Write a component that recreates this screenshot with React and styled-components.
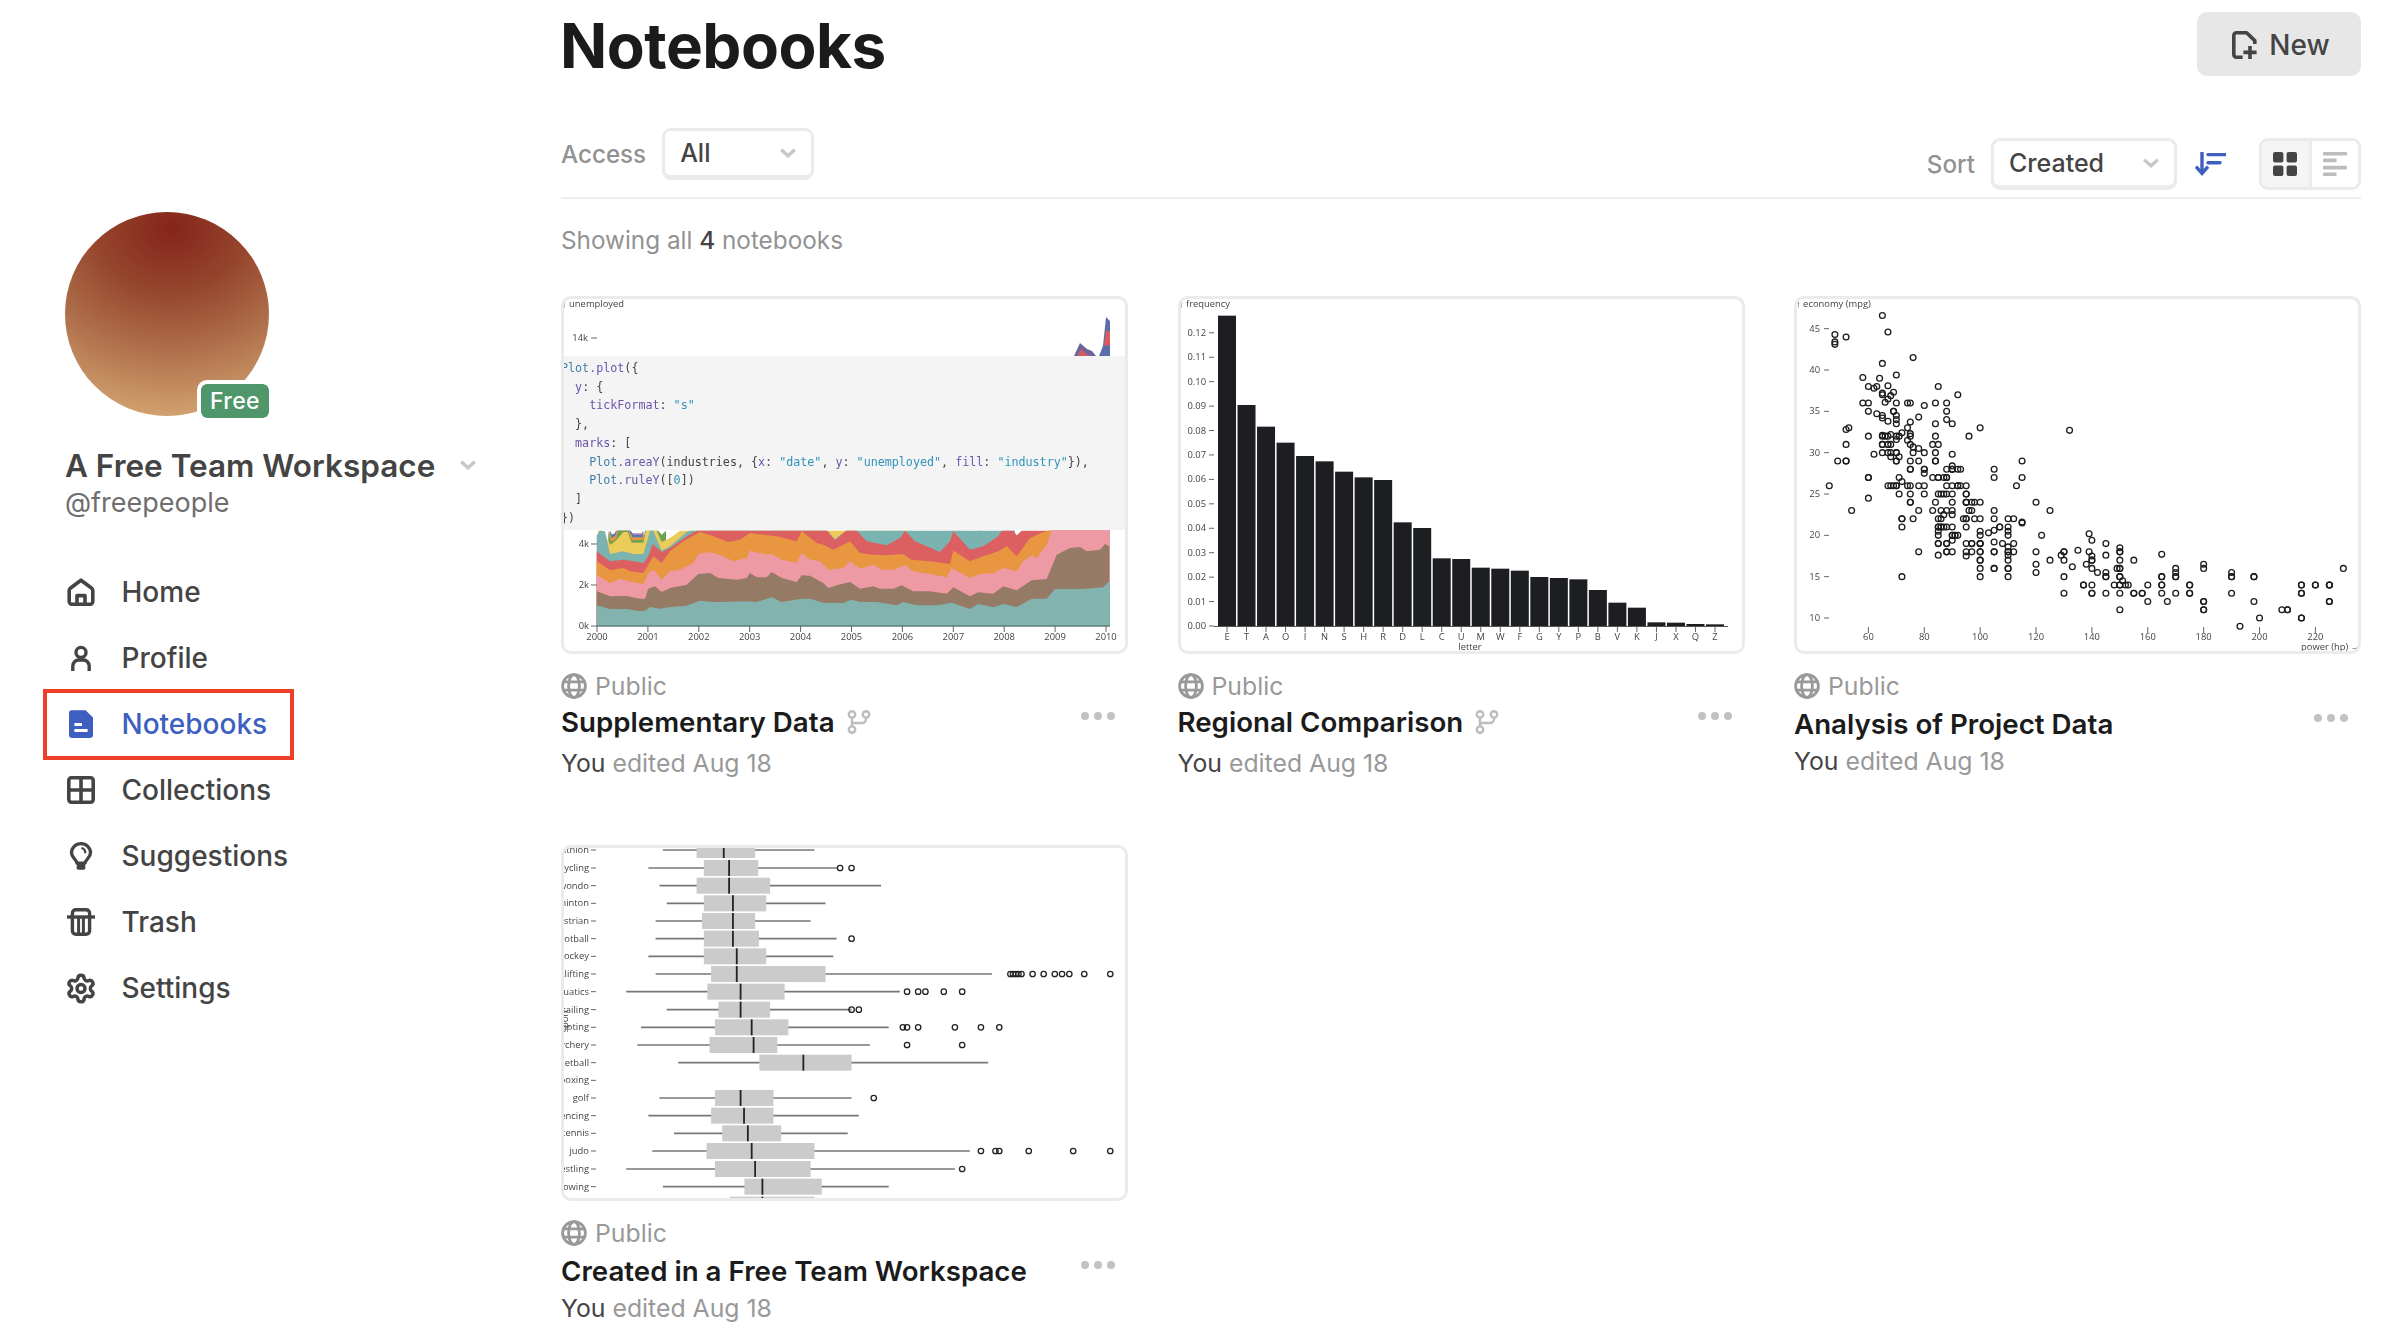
import React from "react";
import styled, { createGlobalStyle } from "styled-components";
import { Settings } from "lucide-react";

const GlobalStyle = createGlobalStyle`
  html, body {
    margin: 0;
    background: #fff;
    font-family: Inter, "Liberation Sans", sans-serif;
    color: #444;
  }
  *, *::before, *::after { box-sizing: border-box; }
`;

const NAV = ["Home", "Profile", "Notebooks", "Collections", "Suggestions", "Trash", "Settings"];

const CODE = [
  [["Plot", "blue"], [".plot", "purple"], ["({", "plain"]],
  [["  y", "purple"], [": {", "plain"]],
  [["    tickFormat", "purple"], [": ", "plain"], ['"s"', "str"]],
  [["  },", "plain"]],
  [["  marks", "purple"], [": [", "plain"]],
  [["    Plot", "blue"], [".areaY", "purple"], ["(industries, {", "plain"], ["x", "purple"], [": ", "plain"], ['"date"', "str"], [", ", "plain"], ["y", "purple"], [": ", "plain"], ['"unemployed"', "str"], [", ", "plain"], ["fill", "purple"], [": ", "plain"], ['"industry"', "str"], ["}),", "plain"]],
  [["    Plot", "blue"], [".ruleY", "purple"], ["([", "plain"], ["0", "str"], ["])", "plain"]],
  [["  ]", "plain"]],
  [["})", "plain"]],
];

const CODE_COLORS = { blue: "#3f7fa6", purple: "#6a55ad", str: "#2f93b8", plain: "#444" };

// stacked layers painted from the top one down, tops as [x, y] in 1/3 px from the plot's corner
const AREA_LAYERS = [
  ["#c47fb2", [[58, 8], [64, 22], [76, 18], [82, 8], [120, 8], [128, 16], [156, 16], [160, 8]]],
  ["#4d78c0", [[60, 8], [66, 20], [74, 16], [78, 8], [122, 8], [130, 20], [155, 20], [158, 8]]],
  ["#e8963f", [[58, 8], [65, 30], [75, 24], [80, 8], [118, 8], [128, 28], [158, 28], [162, 8]]],
  ["#6fa34f", [[55, 8], [62, 42], [78, 32], [85, 8], [115, 8], [125, 36], [160, 36], [165, 8], [205, 8], [215, 20], [228, 8]]],
  ["#ebcb5a", [[24, 8], [40, 8], [52, 35], [62, 50], [80, 35], [100, 12], [113, 12], [125, 44], [160, 44], [168, 8], [200, 8], [215, 42], [240, 30], [270, 8], [970, 8], [985, 22], [1005, 8], [1020, 8], [1050, 38], [1080, 8], [1120, 8], [1140, 28], [1165, 8], [1175, 8], [1195, 24], [1220, 8]]],
  ["#7ab3af", [[20, 22], [30, 8], [45, 10], [60, 78], [100, 70], [130, 78], [160, 78], [170, 45], [180, 8], [190, 8], [215, 68], [240, 55], [290, 12], [300, 8], [710, 8], [735, 33], [770, 8], [800, 8], [830, 8], [840, 8], [890, 8], [930, 8], [950, 8], [1265, 8], [1275, 8]]],
  ["#dc5f61", [[20, 70], [60, 100], [100, 95], [130, 100], [160, 105], [175, 85], [188, 48], [215, 72], [240, 60], [290, 25], [320, 8], [700, 8], [712, 8], [735, 36], [768, 8], [800, 8], [830, 40], [890, 52], [930, 30], [945, 8], [975, 40], [1050, 72], [1080, 40], [1090, 10], [1140, 65], [1180, 55], [1225, 25], [1235, 8], [1270, 8], [1280, 22], [1295, 8], [1390, 8]]],
  ["#e8963f", [[20, 100], [60, 127], [100, 120], [120, 130], [160, 135], [175, 110], [190, 85], [215, 105], [240, 70], [280, 40], [330, 12], [370, 25], [415, 42], [450, 35], [480, 15], [520, 20], [560, 25], [620, 40], [635, 10], [680, 45], [700, 50], [730, 65], [780, 40], [810, 75], [850, 80], [890, 82], [940, 78], [965, 95], [1020, 100], [1080, 108], [1090, 68], [1140, 100], [1180, 85], [1225, 70], [1250, 55], [1280, 85], [1320, 30], [1360, 12], [1385, 6]]],
  ["#ee9aa5", [[20, 140], [60, 165], [90, 153], [130, 163], [160, 168], [175, 135], [190, 125], [215, 155], [240, 130], [270, 125], [310, 105], [325, 78], [360, 72], [400, 85], [430, 100], [470, 90], [480, 68], [530, 80], [545, 78], [575, 95], [620, 105], [635, 75], [660, 95], [690, 100], [715, 125], [760, 120], [780, 100], [810, 122], [850, 110], [875, 125], [910, 125], [945, 110], [970, 130], [1020, 138], [1070, 148], [1085, 120], [1140, 150], [1170, 138], [1210, 135], [1240, 120], [1280, 130], [1300, 100], [1325, 82], [1340, 90], [1370, 50], [1385, 6], [1560, 6]]],
  ["#957a66", [[20, 190], [60, 205], [110, 204], [150, 212], [165, 212], [175, 182], [195, 175], [215, 192], [240, 180], [290, 170], [325, 138], [360, 135], [385, 150], [440, 155], [470, 150], [480, 135], [500, 148], [530, 148], [545, 132], [575, 150], [620, 162], [635, 142], [660, 143], [700, 165], [715, 180], [740, 172], [780, 162], [810, 182], [850, 175], [870, 182], [910, 182], [935, 172], [970, 190], [1020, 190], [1070, 197], [1090, 178], [1140, 205], [1165, 193], [1210, 197], [1240, 175], [1280, 187], [1325, 157], [1370, 153], [1400, 80], [1440, 60], [1470, 57], [1490, 70], [1530, 65], [1545, 48], [1558, 55]]],
  ["#83b3ae", [[20, 232], [60, 243], [110, 243], [150, 250], [165, 248], [180, 237], [210, 242], [235, 238], [290, 233], [330, 218], [370, 222], [400, 222], [470, 220], [500, 222], [545, 208], [575, 222], [630, 213], [660, 212], [700, 224], [760, 225], [783, 215], [810, 222], [860, 222], [920, 232], [940, 222], [980, 232], [1040, 232], [1085, 224], [1140, 243], [1165, 228], [1210, 238], [1240, 228], [1280, 237], [1325, 212], [1370, 212], [1395, 183], [1480, 183], [1540, 178], [1555, 162], [1560, 162]]],
];

const LETTERS = [
  ["E", 77], ["T", 345], ["A", 410], ["O", 458], ["I", 498], ["N", 514], ["S", 545], ["H", 562], ["R", 570],
  ["D", 697], ["L", 714], ["C", 805], ["U", 807], ["M", 833], ["W", 836], ["F", 842], ["G", 861], ["Y", 864],
  ["P", 868], ["B", 900], ["V", 938], ["K", 953], ["J", 997], ["X", 998], ["Q", 1002], ["Z", 1003],
];

const CARS = [
  [130,18],[165,15],[150,18],[150,16],[140,17],[198,15],[220,14],[215,14],[225,14],[190,15],[170,15],[160,14],[150,15],[225,14],[95,24],[95,22],[97,18],[85,21],[88,27],[46,26],[87,25],[90,24],[95,25],[113,26],[90,21],[215,10],[200,10],[210,11],[193,9],[88,27],[90,28],[95,25],[100,19],[105,16],[100,17],[88,19],[100,18],[165,14],[175,14],[153,14],[150,14],[180,12],[170,13],[175,13],[110,18],[72,22],[100,19],[88,18],[86,23],[90,28],[70,30],[76,30],[65,31],[69,35],[60,27],[70,26],[95,24],[80,25],[54,23],[90,20],[86,21],[155,13],[160,12],[190,13],[97,19],[130,13],[140,13],[112,18],[76,22],[87,21],[69,26],[86,22],[92,28],[97,23],[80,28],[145,13],[137,14],[158,13],[215,13],[225,12],[105,18],[100,16],[72,21],[94,22],[85,19],[107,21],[145,15],[230,16],[49,29],[75,24],[91,20],[122,20],[180,11],[67,31],[65,32],[75,25],[110,16],[105,16],[52,29],[60,24.5],[70,29],[78,26],[75,26],[83,27],[67,26],[80,26],[84,29],[84,29],[92,26],[96,32],[100,33],[132,32.7],[115,29],[115,27],[105,28],[105,27],[120,24],[125,23],[75,28],[85,27],[88,26],[90,26],[95,26],[85,25],[86,25],[88,25],[90,25],[95,24],[98,24],[97,24],[100,24],[84,24],[75,24],[60,27],[72,26.5],[68,26],[70,26],[71,27],[71,25],[78,23],[83,23],[88,23],[90,23],[96,23],[105,23],[72,22],[85,22],[87,22.5],[90,22.5],[95,22],[98,22],[100,22],[105,22],[110,22],[112,22],[115,21.5],[115,21.6],[95,21],[85,21],[86,21],[88,21],[85,20.5],[85,20],[90,20],[91,20],[92,20],[100,20.5],[100,20],[103,20.3],[105,20.6],[107,21],[110,21],[110,20.5],[110,20],[85,19],[88,19],[90,19.4],[95,19],[97,19],[100,19],[105,19.2],[108,19],[110,18.6],[112,19],[110,18],[95,18],[100,18],[105,18],[110,17.6],[110,17],[100,17],[85,17.6],[95,17.5],[110,16],[100,15],[110,15],[72,15],[78,18],[88,18],[90,18],[120,18],[120,16.5],[120,15.5],[125,17],[130,18],[129,17.6],[130,17],[130,15],[135,18.2],[133,16.2],[139,20.2],[140,19.4],[139,18],[140,17.5],[140,17],[138,16.5],[140,16],[142,15.5],[145,19],[145,17.6],[145,15.5],[145,15],[150,18.5],[150,18],[150,17],[149,16],[150,16],[150,15],[151,14.5],[152,14],[148,14],[150,14],[155,17],[150,13],[140,14],[140,13],[137,14],[150,11],[155,13],[158,13],[165,17.7],[165,15],[165,14],[165,13],[167,12],[170,16],[170,15.5],[170,15],[175,14],[175,13],[180,16.5],[180,16],[180,12],[180,11],[190,15.5],[190,15],[198,15],[198,12],[208,11],[210,11],[215,14],[215,13],[215,10],[220,14],[225,14],[225,12],
  [65,46.6],[67,44.6],[48,44.3],[52,44],[48,43.4],[48,43.1],[76,41.5],[65,40.8],[70,39.4],[58,39.1],[67,38.1],[63,38],[64,39],[60,38],[62,37.8],[85,38],[69,37.3],[65,37.2],[65,37],[92,37],[68,36.9],[67,36.5],[66,36.1],[58,36],[60,36],[70,36],[74,36],[75,36],[80,35.7],[84,36],[88,36],[60,35],[88,35],[63,34.7],[65,34.5],[65,34.2],[69,35],[70,34.5],[70,34],[67,33.8],[75,33.7],[84,33.5],[70,33.5],[78,34.3],[88,34],[90,33.5],[53,33],[52,32.8],[74,33],[72,32.4],[75,32.3],[75,32],[60,32],[65,32.1],[66,32],[68,32.2],[70,32],[71,32],[67,32],[70,31.6],[74,31.5],[75,31],[76,30.7],[52,31],[65,31],[67,31],[68,31],[83,31],[85,31],[84,32],[78,30.5],[75,29],[78,29],[80,30],[84,30],[62,29.8],[65,30],[67,30],[68,30],[70,30],[71,29.5],[68,29.5],[70,29],[52,29],[90,29.8],[75,28],[80,28],[80,27.5],[90,28.4],[90,28],[88,28],[93,28],[87,27],[85,27],[92,26],[93,26],[74,26],
];

const BOX_ROWS = [
  ["triathlon", 30, 295, 383, 454, 536, 691, []],
  ["cycling", 84, 257, 402, 468, 544, 750, [758, 788]],
  ["taekwondo", 137, 286, 383, 468, 575, 865, []],
  ["badminton", 190, 305, 402, 478, 565, 720, []],
  ["equestrian", 243, 276, 397, 478, 536, 681, []],
  ["football", 296, 276, 402, 478, 546, 749, [788]],
  ["hockey", 349, 257, 402, 488, 565, 740, []],
  ["weightlifting", 402, 276, 421, 488, 720, 1155, [1203, 1210, 1217, 1224, 1232, 1261, 1290, 1319, 1338, 1357, 1396, 1464]],
  ["aquatics", 455, 199, 411, 498, 613, 914, [933, 962, 981, 1029, 1077]],
  ["sailing", 509, 305, 440, 498, 575, 788, [788, 807]],
  ["shooting", 562, 238, 431, 527, 623, 885, [922, 933, 962, 1058, 1126, 1174]],
  ["archery", 615, 228, 417, 532, 594, 836, [933, 1077]],
  ["basketball", 668, 335, 547, 662, 788, 1145, []],
  ["boxing", 721],
  ["golf", 774, 286, 431, 498, 584, 788, [846]],
  ["fencing", 827, 257, 421, 507, 584, 807, []],
  ["table tennis", 880, 324, 450, 517, 604, 778, []],
  ["judo", 933, 267, 409, 527, 691, 1097, [1126, 1164, 1174, 1251, 1367, 1464]],
  ["wrestling", 987, 199, 431, 536, 681, 1058, [1077]],
  ["rowing", 1040, 295, 508, 555, 710, 885, []],
];

function areaPath(points) {
  const tx = (x) => (29 + x / 3).toFixed(1);
  const ty = (y) => (232 + y / 3).toFixed(1);
  const first = points[0][0];
  const last = points[points.length - 1][0];
  const top = points.map(([x, y]) => `${tx(x)},${ty(y)}`).join(" ");
  return `M${tx(first)},330 L${top} L${tx(last)},330 Z`;
}

function AreaChart() {
  return (
    <ChartSvg viewBox="3 3 561 352">
      <AxisText x="1" y="11">↑ unemployed</AxisText>
      <AxisText x="27" y="45" $end>14k</AxisText>
      <line x1="30" x2="36" y1="42" y2="42" stroke="#666" />
      <path d="M513 60 L519 47 L526 53 L531 55 L535 60 Z" fill="#6d6597" />
      <path d="M516 60 L520 53 L526 58 L529 60 Z" fill="#cf5a68" />
      <path d="M538 60 L542 50 L545 21 L549 25 L549 60 Z" fill="#5a6fa8" />
      <path d="M543 50 L545 34 L549 36 L549 49 Z" fill="#d95b5e" />
      {AREA_LAYERS.map(([color, points], i) => (
        <path key={i} d={areaPath(points)} fill={color} />
      ))}
      <line x1="36" x2="549" y1="330" y2="330" stroke="#5b7f7c" strokeWidth="1.5" />
      {[["4k", 248], ["2k", 289], ["0k", 330]].map(([label, y]) => (
        <g key={label}>
          <AxisText x="28" y={y + 3} $end>{label}</AxisText>
          <line x1="30" x2="36" y1={y} y2={y} stroke="#666" />
        </g>
      ))}
      {Array.from({ length: 11 }, (_, i) => (
        <g key={i}>
          <line x1={36 + i * 50.9} x2={36 + i * 50.9} y1="330" y2="336" stroke="#666" />
          <AxisText x={36 + i * 50.9} y="344" $middle>{2000 + i}</AxisText>
        </g>
      ))}
    </ChartSvg>
  );
}

function BarChart() {
  const ticks = Array.from({ length: 13 }, (_, i) => i);
  return (
    <ChartSvg viewBox="3 3 561 352">
      <AxisText x="1" y="11">↑ frequency</AxisText>
      {ticks.map((i) => {
        const y = 1008 / 3 - 6 - (i * 73.3) / 3;
        return (
          <g key={i}>
            <AxisText x="28" y={y + 3} $end>{(i / 100).toFixed(2)}</AxisText>
            <line x1="31" x2="36" y1={y} y2={y} stroke="#666" />
          </g>
        );
      })}
      {LETTERS.map(([letter, top], i) => {
        const x = 40 + i * 19.52;
        const y = top / 3 - 6;
        return (
          <g key={letter}>
            <rect x={x} y={y} width="18" height={330 - y} fill="#1d1e22" />
            <line x1={x + 9} x2={x + 9} y1="330" y2="336" stroke="#666" />
            <AxisText x={x + 9} y="344" $middle>{letter}</AxisText>
          </g>
        );
      })}
      <line x1="36" x2="550" y1="330.5" y2="330.5" stroke="#555" />
      <AxisText x="292" y="354" $middle>letter</AxisText>
    </ChartSvg>
  );
}

function ScatterChart() {
  const px = (hp) => (231 + (hp - 60) * 7.3) / 2.613 - 14;
  const py = (mpg) => (116 + (45 - mpg) * 24.8) / 3 - 6;
  return (
    <ChartSvg viewBox="3 3 561 352">
      <AxisText x="2" y="11">↑ economy (mpg)</AxisText>
      {[45, 40, 35, 30, 25, 20, 15, 10].map((v) => (
        <g key={v}>
          <AxisText x="26" y={py(v) + 3} $end>{v}</AxisText>
          <line x1="30" x2="35" y1={py(v)} y2={py(v)} stroke="#666" />
        </g>
      ))}
      {[60, 80, 100, 120, 140, 160, 180, 200, 220].map((v) => (
        <g key={v}>
          <line x1={px(v)} x2={px(v)} y1="331" y2="337" stroke="#666" />
          <AxisText x={px(v)} y="344" $middle>{v}</AxisText>
        </g>
      ))}
      <AxisText x="566" y="354" $end>power (hp) →</AxisText>
      {CARS.map(([hp, mpg], i) => (
        <circle key={i} cx={px(hp)} cy={py(mpg)} r="2.9" fill="none" stroke="#1c1c1c" strokeWidth="1.3" />
      ))}
    </ChartSvg>
  );
}

function BoxChart() {
  const px = (z) => z / 2.613 - 11;
  const py = (z) => z / 3 - 5;
  return (
    <ChartSvg viewBox="3 3 561 350">
      <AxisText x="7" y="176" transform="rotate(-90 7 176)" $middle>sport</AxisText>
      {BOX_ROWS.map(([name, zy, wl, bl, med, br, wr, outliers]) => {
        const y = py(zy);
        return (
          <g key={name}>
            <AxisText x="28" y={y + 3} $end>{name}</AxisText>
            <line x1="30" x2="35" y1={y} y2={y} stroke="#666" />
            {wl && (
              <>
                <line x1={px(wl)} x2={px(wr)} y1={y} y2={y} stroke="#777" strokeWidth="1.6" />
                <rect x={px(bl)} y={y - 8} width={px(br) - px(bl)} height="16" fill="#cbcbcb" />
                <line x1={px(med)} x2={px(med)} y1={y - 8} y2={y + 8} stroke="#222" strokeWidth="1.8" />
                {outliers.map((o) => (
                  <circle key={o} cx={px(o)} cy={y} r="2.7" fill="none" stroke="#222" strokeWidth="1.3" />
                ))}
              </>
            )}
          </g>
        );
      })}
      <rect x={px(470)} y={py(1070)} width={px(691) - px(470)} height="16" fill="#cbcbcb" />
      <line x1={px(555)} x2={px(555)} y1={py(1070)} y2={py(1095)} stroke="#222" strokeWidth="1.8" />
    </ChartSvg>
  );
}

function NavIcon({ name }) {
  if (name === "Home")
    return (
      <IconSvg viewBox="0 0 28 28" fill="none" stroke="currentColor" strokeWidth="3.6" strokeLinejoin="round">
        <path d="M14 2.2 L3.6 10 a3 3 0 0 0-1.4 2.4 V23.4 a3 3 0 0 0 3 3 H22.8 a3 3 0 0 0 3-3 V12.4 a3 3 0 0 0-1.4-2.4 Z" />
        <path d="M10 26 V17.6 H18 V26" />
      </IconSvg>
    );
  if (name === "Profile")
    return (
      <IconSvg viewBox="0 0 28 28" fill="none" stroke="currentColor" strokeWidth="3.4">
        <circle cx="14" cy="8.4" r="5" />
        <path d="M5.8 27 V22 a6 6 0 0 1 6-6 h4.4 a6 6 0 0 1 6 6 V27" />
      </IconSvg>
    );
  if (name === "Notebooks")
    return (
      <IconSvg viewBox="0 0 28 28">
        <path d="M4.4 0.2 H18.6 L26 7.6 V25 a3 3 0 0 1-3 3 H5 a3 3 0 0 1-3-3 V2.8 a2.6 2.6 0 0 1 2.4-2.6 Z" fill="currentColor" />
        <path d="M7.4 14.4 H15 M7.4 20.4 H20.6" stroke="#fff" strokeWidth="3" />
      </IconSvg>
    );
  if (name === "Collections")
    return (
      <IconSvg viewBox="0 0 28 28" fill="none" stroke="currentColor" strokeWidth="3.6">
        <rect x="1.8" y="1.8" width="24.4" height="24.4" rx="2.6" />
        <path d="M14 1.8 V26.2 M1.8 14 H26.2" />
      </IconSvg>
    );
  if (name === "Suggestions")
    return (
      <IconSvg viewBox="0 0 28 30" fill="none" stroke="currentColor" strokeWidth="3.6">
        <path d="M9.6 22.6 C9 18.6 3.8 16.6 3.8 11.6 A10.2 9.8 0 0 1 24.2 11.6 C24.2 16.6 19 18.6 18.4 22.6 Z" strokeLinejoin="round" />
        <rect x="9.4" y="22" width="9.2" height="7.6" rx="1.6" fill="currentColor" stroke="none" />
        <path d="M14.4 6.4 A5.4 5.4 0 0 1 18.6 12" strokeWidth="2.4" />
      </IconSvg>
    );
  if (name === "Trash")
    return (
      <IconSvg viewBox="0 0 28 28" fill="none" stroke="currentColor" strokeWidth="3.4">
        <path d="M0 9 H28" />
        <rect x="5.4" y="1.8" width="17.2" height="24.4" rx="3.4" />
        <path d="M11.6 9 V26 M16.4 9 V26" strokeWidth="3" />
      </IconSvg>
    );
  return <Settings size={33} strokeWidth={2.6} />;
}

function Chevron() {
  return (
    <svg width="16" height="10" viewBox="0 0 16 10" fill="none" stroke="#c8c8c8" strokeWidth="3.4">
      <path d="M1.2 1.8 L8 7.8 L14.8 1.8" />
    </svg>
  );
}

function GlobeIcon() {
  return (
    <svg width="26" height="26" viewBox="0 0 26 26" fill="none" stroke="#999" strokeWidth="2.8">
      <circle cx="13" cy="13" r="11.4" />
      <ellipse cx="13" cy="13" rx="5.4" ry="11.4" />
      <path d="M2.6 8.8 H23.4 M2.6 17.2 H23.4" />
    </svg>
  );
}

function ForkIcon() {
  return (
    <svg width="24" height="24" viewBox="0 0 24 24" fill="none" stroke="#bdbdbd" strokeWidth="2.4">
      <circle cx="5" cy="4.4" r="3.2" />
      <circle cx="19" cy="4.4" r="3.2" />
      <circle cx="5" cy="19.6" r="3.2" />
      <path d="M5 7.6 V16.4 M19 7.6 V9 a4 4 0 0 1-4 4 H5" />
    </svg>
  );
}

function NewIcon() {
  return (
    <svg width="25" height="28" viewBox="0 0 25 28" fill="none" stroke="#444" strokeWidth="3.6">
      <path d="M10.6 26.2 H4.4 a2.6 2.6 0 0 1-2.6-2.6 V4.4 A2.6 2.6 0 0 1 4.4 1.8 H14.6 L22.8 9.6 V13" strokeLinejoin="round" />
      <path d="M18 15 V28 M11.4 21.4 H24.6" />
    </svg>
  );
}

function SortIcon() {
  return (
    <svg width="31" height="24" viewBox="0 0 31 24" fill="none" stroke="#3d5fbf" strokeWidth="3.4">
      <path d="M7 0 V20" />
      <path d="M1 14.6 L7 21.4 L13 14.6" />
      <path d="M13 2.6 H31 M13 10.8 H25" strokeLinecap="round" />
    </svg>
  );
}

function GridIcon() {
  return (
    <svg width="24" height="24" viewBox="0 0 24 24" fill="#444">
      <rect width="10.4" height="10.4" rx="2" />
      <rect x="13.6" width="10.4" height="10.4" rx="2" />
      <rect y="13.6" width="10.4" height="10.4" rx="2" />
      <rect x="13.6" y="13.6" width="10.4" height="10.4" rx="2" />
    </svg>
  );
}

function ListIcon() {
  return (
    <svg width="24" height="24" viewBox="0 0 24 24" fill="#bdbdbd">
      <rect width="24" height="3.6" rx="1" />
      <rect y="6.6" width="13.6" height="3.6" rx="1" />
      <rect y="13.8" width="24" height="3.6" rx="1" />
      <rect y="20.4" width="13.6" height="3.6" rx="1" />
    </svg>
  );
}

function CodeBlock() {
  return (
    <CodeOverlay>
      {CODE.map((tokens, i) => (
        <CodeLine key={i}>
          {tokens.map(([text, kind], j) => (
            <CodeToken key={j} $kind={kind}>{text}</CodeToken>
          ))}
        </CodeLine>
      ))}
    </CodeOverlay>
  );
}

function NotebookCard({ title, forked, short, chart }) {
  return (
    <Card>
      <Thumb $short={short}>{chart}</Thumb>
      <Access>
        <GlobeIcon />
        <span>Public</span>
      </Access>
      <TitleRow $forked={forked}>
        <CardTitle>{title}</CardTitle>
        {forked && <ForkIcon />}
        <Dots>
          <i />
          <i />
          <i />
        </Dots>
      </TitleRow>
      <Edited $forked={forked}>
        <b>You</b> edited Aug 18
      </Edited>
    </Card>
  );
}

export default function App() {
  return (
    <>
      <GlobalStyle />
      <Page>
        <Sidebar>
          <Avatar>
            <PlanBadge>Free</PlanBadge>
          </Avatar>
          <WorkspaceName>
            A Free Team Workspace
            <Chevron />
          </WorkspaceName>
          <Handle>@freepeople</Handle>
          <Nav>
            {NAV.map((name) => (
              <NavItem key={name} $active={name === "Notebooks"}>
                <IconSlot>
                  <NavIcon name={name} />
                </IconSlot>
                {name}
              </NavItem>
            ))}
          </Nav>
        </Sidebar>
        <Main>
          <Header>
            <PageTitle>Notebooks</PageTitle>
            <NewButton>
              <NewIcon />
              New
            </NewButton>
          </Header>
          <Toolbar>
            <FilterGroup>
              <FieldLabel>Access</FieldLabel>
              <Select $width={152}>
                All
                <Chevron />
              </Select>
            </FilterGroup>
            <SortGroup>
              <FieldLabel>Sort</FieldLabel>
              <Select $width={186}>
                Created
                <Chevron />
              </Select>
              <SortButton>
                <SortIcon />
              </SortButton>
              <ViewToggle>
                <ViewCell $on>
                  <GridIcon />
                </ViewCell>
                <ViewCell>
                  <ListIcon />
                </ViewCell>
              </ViewToggle>
            </SortGroup>
          </Toolbar>
          <Count>
            Showing all <b>4</b> notebooks
          </Count>
          <CardGrid>
            <NotebookCard
              title="Supplementary Data"
              forked
              chart={
                <>
                  <AreaChart />
                  <CodeBlock />
                </>
              }
            />
            <NotebookCard title="Regional Comparison" forked chart={<BarChart />} />
            <NotebookCard title="Analysis of Project Data" chart={<ScatterChart />} />
            <NotebookCard title="Created in a Free Team Workspace" short chart={<BoxChart />} />
          </CardGrid>
        </Main>
      </Page>
    </>
  );
}

const Page = styled.div`
  display: grid;
  grid-template-columns: 561px 1800px;
  height: 1338px;
  overflow: hidden;
`;

const Sidebar = styled.aside`
  padding: 212px 0 0 65px;
`;

const Avatar = styled.div`
  position: relative;
  width: 204px;
  height: 204px;
  border-radius: 50%;
  background: radial-gradient(ellipse 125% 105% at 52% 8%, #84241a 0%, #96462d 30%, #b0714c 58%, #cb9868 82%, #e2b57e 100%);
`;

const PlanBadge = styled.span`
  position: absolute;
  right: -4px;
  bottom: -6px;
  width: 76px;
  height: 42px;
  display: flex;
  align-items: center;
  justify-content: center;
  border: 4px solid #fff;
  border-radius: 10px;
  background: #4f966b;
  background-clip: padding-box;
  color: #fff;
  font-size: 23px;
  font-weight: 500;
  letter-spacing: 0.4px;
`;

const WorkspaceName = styled.div`
  display: flex;
  align-items: center;
  gap: 25px;
  margin-top: 29px;
  height: 40px;
  font-size: 31.5px;
  font-weight: 600;
  color: #444;
  white-space: nowrap;
`;

const Handle = styled.div`
  height: 36px;
  line-height: 36px;
  font-size: 27px;
  color: #6e6e6e;
`;

const Nav = styled.nav`
  margin-top: 38px;
`;

const NavItem = styled.div`
  position: relative;
  display: flex;
  align-items: center;
  height: 66px;
  gap: 24.5px;
  font-size: 28px;
  font-weight: 500;
  color: ${({ $active }) => ($active ? "#3d5fbf" : "#444")};

  ${({ $active }) =>
    $active &&
    `&::after {
      content: "";
      position: absolute;
      left: -22px;
      top: -2px;
      width: 251px;
      height: 71px;
      border: 4px solid #ee4028;
    }`}
`;

const IconSlot = styled.span`
  width: 32px;
  display: flex;
  justify-content: center;
`;

const IconSvg = styled.svg`
  width: 28px;
  height: 28px;
`;

const Main = styled.main`
  min-width: 0;
`;

const Header = styled.header`
  display: flex;
  justify-content: space-between;
  align-items: center;
  margin-top: 12px;
  height: 64px;
`;

const PageTitle = styled.h1`
  margin: 2px 0 0 -1px;
  font-size: 62px;
  font-weight: 700;
  color: #1b1b1b;
  letter-spacing: -0.5px;
`;

const NewButton = styled.button`
  display: flex;
  align-items: center;
  justify-content: center;
  gap: 12px;
  width: 164px;
  height: 64px;
  padding: 2px 0 0 4px;
  border: 0;
  border-radius: 10px;
  background: #e7e7e7;
  color: #444;
  font: 500 28px Inter, sans-serif;
`;

const Toolbar = styled.div`
  display: flex;
  justify-content: space-between;
  align-items: flex-start;
  margin-top: 52px;
  height: 71px;
  padding-bottom: 7px;
  border-bottom: 2px solid #eee;
`;

const FilterGroup = styled.div`
  display: flex;
  align-items: center;
  gap: 16px;
`;

const SortGroup = styled(FilterGroup)`
  margin-top: 10px;
`;

const FieldLabel = styled.span`
  font-size: 24.2px;
  font-weight: 500;
  color: #929292;
`;

const Select = styled.div`
  display: flex;
  align-items: center;
  justify-content: space-between;
  width: ${({ $width }) => $width}px;
  height: 52px;
  padding: 0 15px;
  border: 3px solid #ebebeb;
  border-bottom-width: 5px;
  border-radius: 9px;
  background: #fff;
  font-size: 25px;
  font-weight: 500;
  color: #444;
`;

const SortButton = styled.span`
  display: flex;
  margin: 0 17px 0 2px;
`;

const ViewToggle = styled.div`
  display: flex;
  width: 102px;
  height: 52px;
  border: 3px solid #ebebeb;
  border-radius: 9px;
  overflow: hidden;
`;

const ViewCell = styled.span`
  flex: 1;
  display: flex;
  align-items: center;
  justify-content: center;
  background: ${({ $on }) => ($on ? "#f5f5f5" : "#fff")};
  border-right: ${({ $on }) => ($on ? "3px solid #ebebeb" : "0")};
`;

const Count = styled.div`
  margin-top: 26px;
  height: 30px;
  line-height: 30px;
  font-size: 24.3px;
  color: #929292;

  b {
    font-weight: 500;
    color: #444;
  }
`;

const CardGrid = styled.div`
  display: grid;
  grid-template-columns: repeat(3, 567px);
  column-gap: 49.5px;
  row-gap: 66px;
  margin-top: 41px;
`;

const Card = styled.article`
  min-width: 0;
`;

const Thumb = styled.div`
  position: relative;
  height: ${({ $short }) => ($short ? 356 : 358)}px;
  border: 3px solid #ebebeb;
  border-radius: 10px;
  overflow: hidden;
  background: #fff;
`;

const ChartSvg = styled.svg`
  display: block;
  width: 561px;
  height: 100%;
  filter: blur(0.4px);
`;

const AxisText = styled.text`
  font-family: "Open Sans", sans-serif;
  font-size: 9.4px;
  fill: #444;
  text-anchor: ${({ $end, $middle }) => ($end ? "end" : $middle ? "middle" : "start")};
`;

const CodeOverlay = styled.div`
  position: absolute;
  left: 0;
  right: 0;
  top: 57px;
  height: 174px;
  padding-top: 3px;
  background: #f4f4f4;
  font-family: "DejaVu Sans Mono", monospace;
  font-size: 11.7px;
  line-height: 18.7px;
  white-space: pre;
  filter: blur(0.25px);
`;

const CodeLine = styled.div`
  margin-left: -3px;
`;

const CodeToken = styled.span`
  color: ${({ $kind }) => CODE_COLORS[$kind]};
`;

const Access = styled.div`
  display: flex;
  align-items: center;
  gap: 8px;
  margin-top: 17px;
  height: 30px;
  font-size: 24.8px;
  color: #999;
`;

const TitleRow = styled.div`
  display: flex;
  align-items: center;
  gap: 12px;
  margin-top: ${({ $forked }) => ($forked ? 3 : 4)}px;
  height: ${({ $forked }) => ($forked ? 36 : 37)}px;
`;

const CardTitle = styled.h3`
  margin: 0;
  font-size: 27.7px;
  font-weight: 600;
  color: #1b1b1b;
  white-space: nowrap;
`;

const Dots = styled.span`
  display: flex;
  gap: 5px;
  margin: 0 13px 12px auto;

  i {
    width: 8px;
    height: 8px;
    border-radius: 50%;
    background: #c2c2c2;
  }
`;

const Edited = styled.div`
  margin-top: ${({ $forked }) => ($forked ? 7 : 3)}px;
  height: 32px;
  line-height: 32px;
  font-size: 24.8px;
  color: #999;

  b {
    font-weight: 400;
    color: #444;
  }
`;
